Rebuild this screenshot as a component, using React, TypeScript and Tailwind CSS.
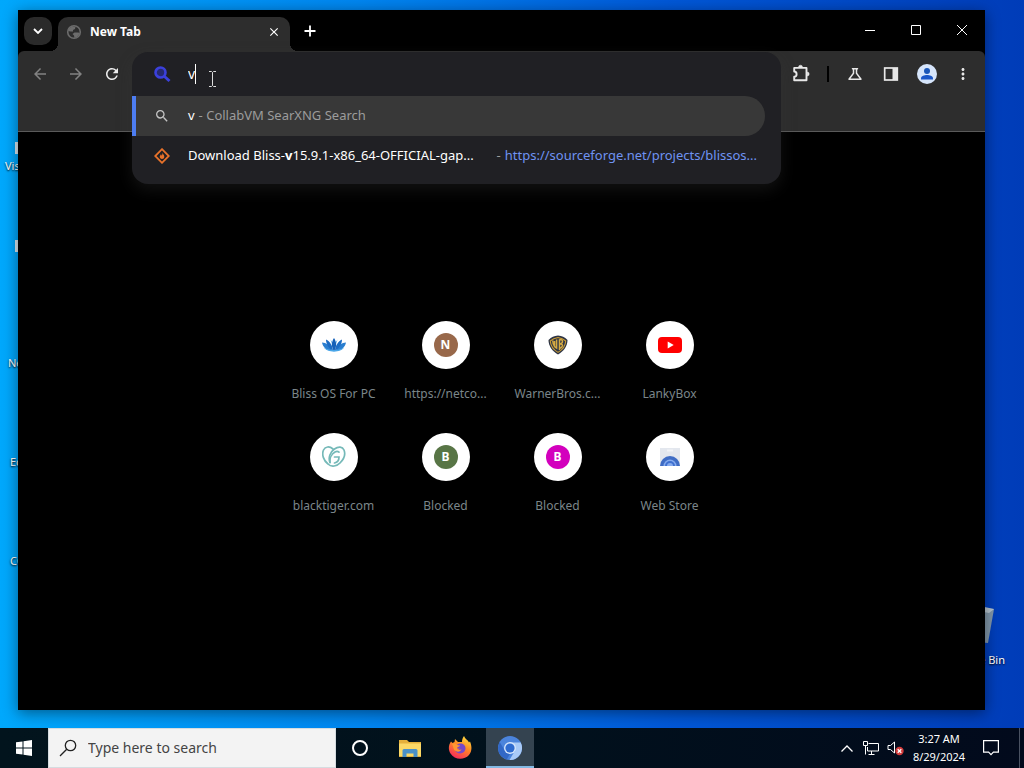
import React from 'react';
import {
  MdArrowBack,
  MdArrowForward,
  MdClose,
  MdMoreVert,
  MdOutlineScience,
  MdRefresh,
  MdSearch,
} from 'react-icons/md';

interface ShortcutProps {
  label: string;
  icon: React.ReactNode;
}

const Globe = () => (
  <svg viewBox="0 0 16 16" className="size-4 shrink-0">
    <circle cx="8" cy="8" r="6.3" fill="none" stroke="#6c6c6c" strokeWidth="1.6" />
    <path d="M3 4.500 6 2.500l3.500.3L9 5 7 6v1.500H4.500L2 7zM8.500 8.500h4l1.300 1L11 13l-2.500 1-.5-2.500L6.500 10z" fill="#6c6c6c" />
  </svg>
);

const SearchEngine = () => (
  <svg viewBox="0 0 18 18" className="ml-[21px] size-[18px]" fill="none" stroke="#3b40dc">
    <circle cx="7.500" cy="7.500" r="5" strokeWidth="2.600" fill="#262a70" />
    <path d="m11.500 11.500 5 4.500" strokeWidth="3" />
  </svg>
);

const Puzzle = () => (
  <svg viewBox="0 0 20 20" className="size-5" fill="none" stroke="#e8e8e8" strokeWidth="1.900" strokeLinejoin="round">
    <path d="M3.200 3.900H15.500V16.300H3.200V12.700c1.600 0 2.400-1 2.400-2.500S4.800 7.500 3.200 7.500z" />
    <path d="M7.500 3.200a2 2 0 0 1 4 0zM16.200 8a2 2 0 0 1 0 4z" fill="#e8e8e8" strokeWidth="0.500" />
  </svg>
);

const SidePanel = () => (
  <svg viewBox="0 0 16 16" className="size-4">
    <rect x="1.700" y="2" width="12.600" height="12" fill="none" stroke="#e8e8e8" strokeWidth="1.700" />
    <path d="M9.500 2h5v12h-5z" fill="#e8e8e8" />
  </svg>
);

const Profile = () => (
  <svg viewBox="0 0 20 20" className="size-5">
    <circle cx="10" cy="10" r="10" fill="#d6e5fb" />
    <circle cx="10" cy="7" r="3" fill="#1a56b8" />
    <path d="M4 15.500v-1.300c0-2 3.500-3.200 6-3.200s6 1.200 6 3.200v1.300z" fill="#1a56c8" />
  </svg>
);

const SourceForge = () => (
  <svg viewBox="0 0 16 16" className="size-4 shrink-0">
    <path d="M8 1.200 14.800 8 8 14.800 1.200 8z" fill="none" stroke="#e8722a" strokeWidth="1.800" />
    <path d="M8.300 4.500c.2 1.700 2.200 2.200 2 4.200-.1 1.300-1 2.300-2.300 2.300S5.700 10 5.700 8.800c0-1.300 1-1.600 1-2.600.7.300 1 .8 1 1.600.6-.8.800-2 .6-3.300z" fill="#e8722a" />
  </svg>
);

const Lotus = () => (
  <svg viewBox="0 0 24 24" className="size-6">
    <path d="M0 9.500c4 0 8 3 10 8-5 .5-9-3-10-8zM24 9.500c-4 0-8 3-10 8 5 .5 9-3 10-8z" fill="#2b7fd0" />
    <path d="M4 6.500c4 2 6.500 6 7 11-4-2-7-6-7-11zM20 6.500c-4 2-6.500 6-7 11 4-2 7-6 7-11z" fill="#1c6cc4" />
    <path d="M8.500 6.500 12 17.500l3.500-11-3.500 5z" fill="#59a8e4" />
    <path d="M12 5c2.800 4 2.800 9 0 13-2.800-4-2.800-9 0-13z" fill="#1560b8" />
    <path d="M2 14.500c3 5.500 17 5.500 20 0-3 2-7 2.500-10 2.500s-7-.5-10-2.500z" fill="#48a5e8" />
  </svg>
);

const WarnerShield = () => (
  <svg viewBox="0 0 24 24" className="size-6">
    <path d="M12 2.500c4 .5 6.500 1.500 9.500 4.500 0 6-4 11.500-9.500 14.500C6.500 18.500 2.500 13 2.500 7 5.500 4 8 3 12 2.500z" fill="#2d3445" />
    <path d="M12 4.500c3.500.5 5.500 1.500 7.700 3.500-.2 4.600-3.400 8.800-7.700 11.400C7.700 16.800 4.500 12.600 4.300 8c2.200-2 4.200-3 7.700-3.500z" fill="none" stroke="#c99c35" strokeWidth="1.100" />
    <path d="M6.800 7.500c0 3 .8 5 1.800 6V8v5.500l2 1.500V6.500M13.500 6.300V17M13.500 6.500c4-.5 4 4 0 4.500 4.500-.5 3.500 3.500 0 4.500" fill="none" stroke="#d5aa42" strokeWidth="1.500" />
  </svg>
);

const YouTube = () => (
  <svg viewBox="0 0 24 24" className="size-6">
    <rect y="4" width="24" height="16" rx="4" fill="#f00" />
    <path d="m9.700 8.600 6 3.400-6 3.400z" fill="#fff" />
  </svg>
);

const GoDaddy = () => (
  <svg viewBox="0 0 24 24" className="size-6" fill="none" stroke="#75b9b8" strokeWidth="1.700" strokeLinecap="round">
    <path d="M8 17.500C6 13 8 7 12.500 4c4-3 8-2.500 9.500 1 1.800 4.500-.5 9.500-4 13-3 3.200-8.500 4.500-12 1C1.500 15.500-.5 9.500 1.500 5 3.300 1.300 7.500 1 11 4" />
    <path d="M8 17.500c-.5-4 1.500-8.500 5-10.500 1.500-.8 3-.7 4 .2M12.500 12H17c0 3.500-2 5.500-4.500 6" />
  </svg>
);

const WebStore = () => (
  <svg viewBox="0 0 24 24" className="size-6">
    <path d="M2 3h20v18H2z" fill="#e3e7ee" />
    <path d="M9 4.500h6v2H9z" fill="#f1f3f6" />
    <path d="M2 21a10 10 0 0 1 20 0z" fill="#3f6cc4" />
    <path d="M5.500 21a6.500 6.500 0 0 1 13 0z" fill="#86abee" />
    <path d="M7 21a5 5 0 0 1 10 0z" fill="#3f70d0" />
    <path d="M9 21a3 3 0 0 1 6 0z" fill="#86abee" />
  </svg>
);

const Letter = ({ text, color }: { text: string; color: string }) => (
  <span
    className="flex size-6 items-center justify-center rounded-full text-xs font-bold text-white"
    style={{ backgroundColor: color }}
  >
    {text}
  </span>
);

const shortcuts: ShortcutProps[] = [
  { label: 'Bliss OS For PC', icon: <Lotus /> },
  { label: 'https://netco...', icon: <Letter text="N" color="#98684a" /> },
  { label: 'WarnerBros.c...', icon: <WarnerShield /> },
  { label: 'LankyBox', icon: <YouTube /> },
  { label: 'blacktiger.com', icon: <GoDaddy /> },
  { label: 'Blocked', icon: <Letter text="B" color="#587546" /> },
  { label: 'Blocked', icon: <Letter text="B" color="#d300bd" /> },
  { label: 'Web Store', icon: <WebStore /> },
];

const Shortcut: React.FC<ShortcutProps> = ({ label, icon }) => (
  <a href="#" className="flex h-28 flex-col items-center pt-4">
    <span className="flex size-12 items-center justify-center rounded-full bg-white">{icon}</span>
    <span className="mt-4 text-xs leading-[18px] whitespace-nowrap text-[#7b868a]">{label}</span>
  </a>
);

const IconButton = ({ label, children }: { label: string; children: React.ReactNode }) => (
  <button aria-label={label} className="flex h-11 w-9 shrink-0 items-center justify-center text-[#e8e8e8]">
    {children}
  </button>
);

const Omnibox = () => (
  <div className="absolute inset-x-0 top-0 z-20 rounded-2xl bg-[#202024] pb-2 text-[13px] shadow-[0_6px_16px_rgba(60,60,60,0.3)]">
    <div className="relative flex h-11 items-center">
      <SearchEngine />
      <input
        aria-label="Address and search bar"
        defaultValue="v"
        className="ml-[17px] min-w-0 flex-1 bg-transparent text-sm text-white outline-none"
      />
      <span className="absolute top-3 left-[63px] h-5 w-px bg-white" />
      <svg viewBox="0 0 10 16" className="absolute top-[19px] left-[76px] h-4 w-[10px]" fill="none" stroke="#ddd">
        <path d="M1 .5h2.500l1 1 1-1H8M1 15.500h2.500l1-1 1 1H8M4.500 1.500v13" />
      </svg>
    </div>
    <button className="flex h-10 w-[calc(100%-16px)] items-center rounded-r-full border-l-4 border-[#4d7df2] bg-[#383838] text-left">
      <MdSearch className="ml-[18px] size-4 text-[#c4c4c4]" />
      <span className="ml-[18px] text-white">v</span>
      <span className="ml-1 text-[#9c9c9c]">- CollabVM SearXNG Search</span>
    </button>
    <a href="#" className="flex h-10 items-center pr-6 pl-[22px]">
      <SourceForge />
      <span className="ml-[18px] whitespace-nowrap text-white">
        Download Bliss-<b>v</b>15.9.1-x86_64-OFFICIAL-gap...
      </span>
      <span className="ml-auto text-[#9c9c9c]">-</span>
      <span className="ml-1 whitespace-nowrap text-[#6f93f2]">https://sourceforge.net/projects/blissos...</span>
    </a>
  </div>
);

const TitleBar = () => (
  <div className="flex h-[41px] items-end">
    <button aria-label="Search tabs" className="mb-1.5 ml-1.5 flex size-7 items-center justify-center rounded-[10px] bg-[#2a2a2a]">
      <svg viewBox="0 0 10 6" className="h-1.5 w-2.5" fill="none" stroke="#fff" strokeWidth="1.800">
        <path d="m1 1 4 4 4-4" />
      </svg>
    </button>
    <div className="relative ml-1.5 flex h-[34px] w-58 items-center rounded-t-[10px] bg-[#2d2d2d] px-2 pb-1 before:absolute before:right-full before:bottom-0 before:size-2 before:bg-[radial-gradient(circle_at_0_0,transparent_8px,#2d2d2d_8px)] after:absolute after:bottom-0 after:left-full after:size-2 after:bg-[radial-gradient(circle_at_100%_0,transparent_8px,#2d2d2d_8px)]">
      <Globe />
      <span className="ml-2 text-xs font-bold text-white">New Tab</span>
      <button aria-label="Close tab" className="ml-auto flex size-4 items-center justify-center">
        <MdClose className="size-3.5 text-white" />
      </button>
    </div>
    <button aria-label="New tab" className="mb-1.5 ml-1.5 flex size-7 items-center justify-center">
      <svg viewBox="0 0 12 12" className="size-3" stroke="#fff" strokeWidth="1.800">
        <path d="M6 .5v11M.5 6h11" />
      </svg>
    </button>
    <div className="ml-auto flex h-full pb-0.5 text-white">
      <button aria-label="Minimize" className="flex w-[46px] items-center justify-center">
        <svg viewBox="0 0 10 10" className="size-2.5" stroke="#fff">
          <path d="M0 5.500h10" />
        </svg>
      </button>
      <button aria-label="Maximize" className="flex w-[46px] items-center justify-center">
        <svg viewBox="0 0 10 10" className="size-2.5" fill="none" stroke="#fff">
          <path d="M.5.500h9v9h-9z" />
        </svg>
      </button>
      <button aria-label="Close" className="flex w-[46px] items-center justify-center">
        <svg viewBox="0 0 10 10" className="size-2.5" stroke="#fff">
          <path d="m0 0 10 10M10 0 0 10" />
        </svg>
      </button>
    </div>
  </div>
);

const Browser = () => (
  <div className="absolute top-[10px] right-[39px] bottom-[18px] left-[18px] flex flex-col bg-black shadow-[0_3px_14px_rgba(0,0,0,0.45)]">
    <TitleBar />
    <div className="flex h-[81px] shrink-0 items-start rounded-t-md border-b border-[#5a5a5a] bg-[#2d2d2d] px-1 pt-px">
      <button aria-label="Back" className="flex h-11 w-9 items-center justify-center text-[#828282]">
        <MdArrowBack className="size-[18px]" />
      </button>
      <button aria-label="Forward" className="flex h-11 w-9 items-center justify-center text-[#828282]">
        <MdArrowForward className="size-[18px]" />
      </button>
      <button aria-label="Reload" className="flex h-11 w-9 items-center justify-center text-[#eeeeee]">
        <MdRefresh className="size-[18px]" />
      </button>
      <div className="relative ml-0.5 flex-1 self-stretch">
        <Omnibox />
      </div>
      <div className="ml-0.5 flex items-center">
        <IconButton label="Extensions"><Puzzle /></IconButton>
        <span className="mx-2 h-4 w-0.5 bg-black" />
        <IconButton label="Search Labs"><MdOutlineScience className="size-[18px]" /></IconButton>
        <IconButton label="Side panel"><SidePanel /></IconButton>
        <IconButton label="Profile"><Profile /></IconButton>
        <IconButton label="Menu"><MdMoreVert className="size-[18px]" /></IconButton>
      </div>
    </div>
    <main className="flex flex-1 justify-center pt-[173px]">
      <div className="grid h-56 grid-cols-[repeat(4,112px)]">
        {shortcuts.map((item, i) => (
          <Shortcut key={i} {...item} />
        ))}
      </div>
    </main>
  </div>
);

const desktopIcons = [
  { text: 'Visual', place: 'top-[142px] left-[5px]' },
  { text: '', place: 'top-[240px] left-[5px]' },
  { text: 'Net', place: 'top-[339px] left-[8px]' },
  { text: 'Edge', place: 'top-[438px] left-[10px]' },
  { text: 'CCl', place: 'top-[537px] left-[10px]' },
];

const Firefox = () => (
  <svg viewBox="0 0 24 24" className="size-6">
    <defs>
      <linearGradient id="fox" x1="0.800" y1="0" x2="0.300" y2="1">
        <stop offset="0" stopColor="#ffe141" />
        <stop offset="0.450" stopColor="#ff8a24" />
        <stop offset="1" stopColor="#f5285c" />
      </linearGradient>
    </defs>
    <path d="M3 5.500 4.500 7l2-1 .5-3 3 3h4c0-2 .5-4 2-6 1 3 4 4 5 6.500l1-1c2.500 6 1.500 10.500-1 13.500-5 5.500-14.500 5-18.500-1.500C0 13.500.5 9 3 5.500z" fill="url(#fox)" />
    <path d="M9 9c3-3 8.500-1 8.500 3.300 0 3-2.500 5.200-5.300 5.200-2.500 0-4.700-1.500-5.200-4 2 1 4 .7 5-.8-2.500.2-4-.7-3-3.700z" fill="#7848c8" />
    <path d="M4 8c2-1.500 4-.5 5 1l3 .5c0 1.500-3 1-3 3 1 2 3 1.500 4.500.8-1 3-5.500 3.200-7.500.2C5 11.500 5 9.500 4 8z" fill="#ff9831" />
  </svg>
);

const Chromium = () => (
  <svg viewBox="0 0 24 24" className="size-6">
    <circle cx="12" cy="12" r="12" fill="#4b84dc" />
    <path d="M12 6.500h10.700A12 12 0 0 1 11.500 24l5.300-9z" fill="#a9caf7" />
    <path d="M1.700 6 7 15l5 3-3.300 5.500A12 12 0 0 1 1.700 6z" fill="#3268c6" />
    <circle cx="12" cy="12" r="6" fill="#d5e5fb" />
    <circle cx="12" cy="12" r="4.600" fill="#2e6bd0" />
  </svg>
);

const Taskbar = () => (
  <footer className="flex h-10 shrink-0 items-stretch bg-[linear-gradient(90deg,#02141d,#01111c_50%,#020a1c)] text-white">
    <button aria-label="Start" className="flex w-12 items-center justify-center">
      <svg viewBox="0 0 16 16" className="size-4" fill="#fff">
        <path d="M0 2.300 6.500 1.400v6.100H0zM7.500 1.200 16 0v7.500H7.500zM0 8.500h6.500v6.100L0 13.700zM7.500 8.500H16V16l-8.500-1.200z" />
      </svg>
    </button>
    <label className="flex w-72 items-center border border-[#d5dce0] bg-[#f3f3f3]">
      <svg viewBox="0 0 18 18" className="ml-[10px] size-[18px]" fill="none" stroke="#222" strokeWidth="1.300">
        <circle cx="11.500" cy="6.500" r="5.200" />
        <path d="M7.700 10.300 1 17" />
      </svg>
      <input
        aria-label="Search Windows"
        placeholder="Type here to search"
        className="ml-[11px] min-w-0 flex-1 bg-transparent text-sm outline-none placeholder:text-[#444]"
      />
    </label>
    <div className="flex gap-0.5">
      <button aria-label="Cortana" className="flex w-12 items-center justify-center">
        <span className="size-4 rounded-full border-2 border-white" />
      </button>
      <button aria-label="File Explorer" className="flex w-12 items-center justify-center">
        <svg viewBox="0 0 22 20" className="h-5 w-[22px]">
          <path d="M0 2h8l2 2h12v15H0z" fill="#e5b03b" />
          <path d="M0 5.500h22V18H0z" fill="#fbd866" />
          <path d="M3.500 19v-6.500q0-1.500 1.500-1.500h12q1.500 0 1.500 1.500V19h-4v-3.500h-7V19z" fill="#4a90c8" />
        </svg>
      </button>
      <button aria-label="Firefox" className="flex w-12 items-center justify-center">
        <Firefox />
      </button>
      <button aria-label="Chromium" className="flex w-12 items-center justify-center border-b-2 border-[#83b9e3] bg-[#344350] pt-0.5">
        <Chromium />
      </button>
    </div>
    <div className="ml-auto flex items-center">
      <button aria-label="Show hidden icons" className="flex w-6 justify-center">
        <svg viewBox="0 0 12 7" className="h-[7px] w-3" fill="none" stroke="#fff" strokeWidth="1.300">
          <path d="m.5 6.500 5.500-5.500 5.500 5.500" />
        </svg>
      </button>
      <button aria-label="Network" className="flex w-6 justify-center">
        <svg viewBox="0 0 16 14" className="h-[14px] w-4" fill="none" stroke="#fff">
          <path d="M5.500 2.500h10v7.500h-11V6M5.500 13.500h6M8.500 10v3.500M.5.500h4v4h-4zM2.500 4.500v9" />
        </svg>
      </button>
      <button aria-label="Volume" className="flex w-6 justify-center">
        <svg viewBox="0 0 17 16" className="h-4 w-[17px]" fill="none" stroke="#fff">
          <path d="M1 5.500h2.500l4-3.500v11l-4-3.500H1z" />
          <circle cx="12.500" cy="11" r="4.200" fill="#d23b3b" stroke="none" />
          <path d="m10.700 9.200 3.600 3.600M14.300 9.200l-3.600 3.600" strokeWidth="1.300" />
        </svg>
      </button>
      <button className="w-16 text-center text-[11px] leading-[18px]">
        <span className="block">3:27 AM</span>
        <span className="block">8/29/2024</span>
      </button>
      <button aria-label="Notifications" className="flex w-10 justify-center">
        <svg viewBox="0 0 16 16" className="size-4" fill="none" stroke="#fff" strokeWidth="1.200">
          <path d="M.6.600h14.800v11.500h-5L8 14.700l-2.400-2.600h-5z" />
        </svg>
      </button>
      <button aria-label="Show desktop" className="ml-2 h-10 w-[5px] border-l border-[#4a5262]" />
    </div>
  </footer>
);

export default function App() {
  return (
    <div className="flex h-screen flex-col overflow-hidden font-['Noto_Sans',sans-serif]">
      <div className="relative flex-1 overflow-hidden bg-[linear-gradient(90deg,#00a8fc,#0086f0_35%,#0058d8_65%,#003cb8)]">
        {desktopIcons.map(({ text, place }) => (
          <div key={place} className={`absolute text-[11px] text-white ${place}`}>
            <span className="ml-[10px] block h-3 w-6 bg-[#dbe8f0]" />
            <span className="mt-1 block leading-4 [text-shadow:0_1px_2px_#000]">{text}</span>
          </div>
        ))}
        <div className="absolute top-[604px] right-[19px] flex flex-col items-end text-[11px] text-white">
          <svg viewBox="0 0 40 40" className="mr-[10px] size-10">
            <path d="m4 3 35 2-6 34-22-2z" fill="#8298ab" />
            <path d="m4 3 16-2 19 4-5 4z" fill="#b8c6d1" />
          </svg>
          <span className="mt-1 leading-6 whitespace-nowrap [text-shadow:0_1px_2px_#000]">Recycle Bin</span>
        </div>
        <Browser />
      </div>
      <Taskbar />
    </div>
  );
}
